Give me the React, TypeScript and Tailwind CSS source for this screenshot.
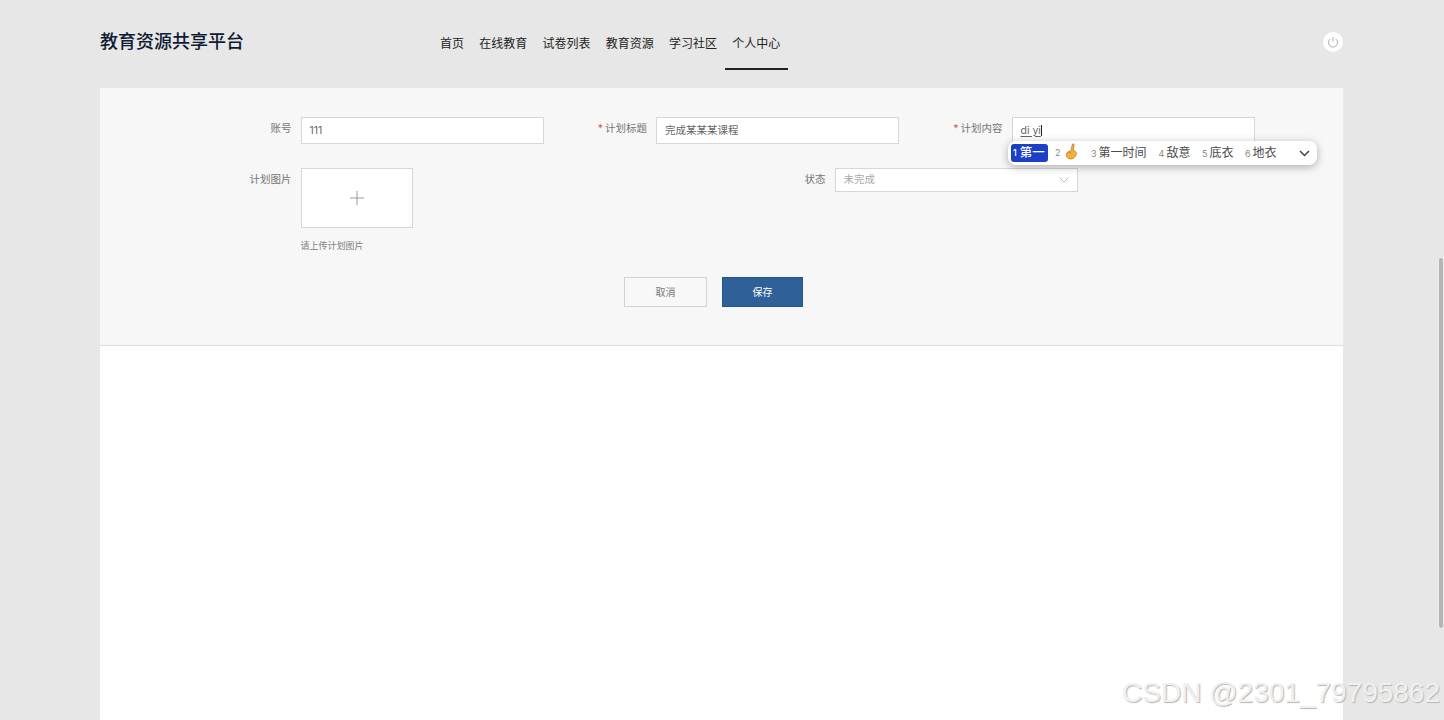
const navItems = ["首页", "在线教育", "试卷列表", "教育资源", "学习社区", "个人中心"];

const font = "font-['Inter','Noto_Sans_CJK_SC',sans-serif]";

function Field({ label, required, children }: { label: string; required?: boolean; children: React.ReactNode }) {
  return (
    <div className="flex w-[355.5px] items-start">
      <label className="w-[103px] pt-[5px] text-right text-[10.5px] leading-[14px] text-[#757575]">
        {required && <span className="mr-[2px] text-[#d9534f]">*</span>}
        {label}
      </label>
      <div className="ml-[9px] flex h-[27px] w-[243px] items-center border border-[#d6d6d6] bg-white px-2 text-[10.5px] text-[#666]">
        {children}
      </div>
    </div>
  );
}

function Candidate({ n, text }: { n: number; text: string }) {
  return (
    <span className="flex items-baseline gap-[2px] text-[12px] text-[#4a4a4a]">
      <span className="text-[9px] text-[#888]">{n}</span>
      {text}
    </span>
  );
}

export default function App() {
  return (
    <div className={`relative h-[720px] overflow-hidden bg-[#e7e7e7] ${font}`}>
      <div className="mx-[100px] w-[1243px]">
        {/* Header */}
        <header className="relative flex h-[88px] items-start">
          <h1 className="w-[340px] pt-[30px] text-[18px] leading-6 font-medium text-[#0f1a33]">教育资源共享平台</h1>
          <nav className="flex gap-[15.25px] pt-[36px] text-[12px] leading-4 text-[#222]">
            {navItems.map((item, i) => (
              <a key={item} className="relative">
                {item}
                {i === 5 && <span className="absolute top-[32px] -left-[7px] h-[2px] w-[63px] bg-[#222]" />}
              </a>
            ))}
          </nav>
          <button className="absolute top-[32px] right-0 flex h-5 w-5 items-center justify-center rounded-full bg-white">
            <svg width="12" height="12" viewBox="0 0 24 24" fill="none" stroke="#999" strokeWidth="1.6">
              <path d="M12 2v9" />
              <path d="M6.5 6a9 9 0 1 0 11 0" />
            </svg>
          </button>
        </header>

        {/* Form panel */}
        <section className="h-[258px] border-b border-[#dcdcdc] bg-[conic-gradient(#f8f8f8_25%,#f6f6f6_0_50%,#f8f8f8_0_75%,#f6f6f6_0)] bg-[length:4px_4px] pt-[29px] pl-[88.5px]">
          <div className="flex">
            <Field label="账号">111</Field>
            <Field label="计划标题" required>完成某某某课程</Field>
            <Field label="计划内容" required>
              <span className="underline underline-offset-2">di yi</span>
              <span className="h-[11px] w-px bg-[#222]" />
            </Field>
          </div>

          <div className="mt-6 flex">
            <div className="flex w-[534px] items-start">
              <label className="w-[103px] pt-[5px] text-right text-[10.5px] leading-[14px] text-[#757575]">计划图片</label>
              <div className="ml-[9px]">
                <div className="flex h-[60px] w-[112.5px] items-center justify-center border border-[#d6d6d6] bg-white">
                  <svg width="16" height="16" viewBox="0 0 16 16" stroke="#999" strokeWidth="1">
                    <path d="M8 1v14M1 8h14" />
                  </svg>
                </div>
                <p className="mt-[12px] text-[9px] leading-3 text-[#808080]">请上传计划图片</p>
              </div>
            </div>
            <div className="flex items-start">
              <label className="w-[103px] pt-[5px] text-right text-[10.5px] leading-[14px] text-[#757575]">状态</label>
              <div className="ml-[9px] flex h-6 w-[243px] items-center justify-between border border-[#d6d6d6] bg-white px-2 text-[10.5px] text-[#aaa]">
                未完成
                <svg width="10" height="6" viewBox="0 0 10 6" fill="none" stroke="#bbb" strokeWidth="1">
                  <path d="M.5.5 5 5 9.500.5" />
                </svg>
              </div>
            </div>
          </div>

          <div className="mt-[25px] flex gap-[15px] pl-[435.5px]">
            <button className="h-[30px] w-[83px] border border-[#d2d2d2] bg-[#f8f8f8] text-[10px] text-[#777]">取消</button>
            <button className="h-[30px] w-[81px] border border-[#1f5590] bg-[#2f6198] text-[10px] text-white">保存</button>
          </div>
        </section>

        <div className="h-[400px] bg-white" />
      </div>

      {/* IME candidate popup */}
      <div className="absolute top-[141px] left-[1008px] flex h-6 w-[309px] items-center rounded-lg bg-white pr-2 pl-[3px] shadow-[0_2px_8px_rgba(0,0,0,0.3)]">
        <span className="flex h-[18px] w-[37px] items-center gap-[3px] rounded-[3px] bg-[#1c3fc8] pl-[2px] text-[12.5px] font-medium text-white">
          <span className="text-[9px]">1</span>第一
        </span>
        <span className="ml-[7px] flex w-[28px] items-center gap-[2px] text-[9px] text-[#888]">
          2
          {/* pointing-up emoji */}
          <svg className="-mt-[3px]" width="16" height="17" viewBox="0 0 16 17">
            <path d="M9.500 1c.9-.4 1.700.2 1.600 1.100l-.8 5.400 1.500.5c1.300.5 1.800 1.500 1.500 2.900-.5 2.600-2.600 5.100-5.400 5.100-2.700 0-4.700-1.800-4.700-4.200 0-1.400.8-2.600 2.100-3.100l2.500-.9Z" fill="#f5b23a" stroke="#b9741a" strokeWidth="0.7" />
            <path d="M4.500 9.500c1.500-.6 3-.2 3.800.9" fill="none" stroke="#b9741a" strokeWidth="0.7" />
          </svg>
        </span>
        <span className="ml-[8px]"><Candidate n={3} text="第一时间" /></span>
        <span className="ml-[12px]"><Candidate n={4} text="敌意" /></span>
        <span className="ml-[11.5px]"><Candidate n={5} text="底衣" /></span>
        <span className="ml-[11.5px]"><Candidate n={6} text="地衣" /></span>
        <svg className="ml-auto -mr-[1px]" width="11" height="7" viewBox="0 0 11 7" fill="none" stroke="#444" strokeWidth="1.500">
          <path d="M1 1l4.500 4.500L10 1" />
        </svg>
      </div>

      {/* Overlay scrollbar */}
      <div className="absolute top-[258px] right-[1px] h-[370px] w-[4px] rounded-full bg-[#b5b5b5] shadow-[0_0_2px_rgba(255,255,255,0.8)]" />

      {/* Watermark */}
      <div className="absolute top-[677px] right-[4px] font-['Liberation_Sans',sans-serif] text-[28px] leading-8 text-[#f0f0f0] [text-shadow:1px_1px_1px_#b5b5b5]">
        CSDN @2301_79795862
      </div>
    </div>
  );
}
